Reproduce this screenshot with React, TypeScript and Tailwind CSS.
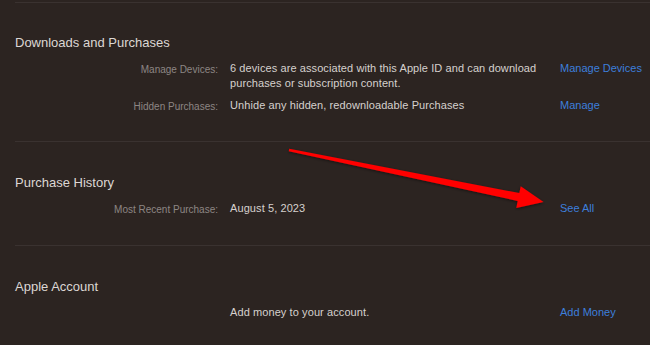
const rows = {
  downloads: [
    {
      label: 'Manage Devices:',
      value: '6 devices are associated with this Apple ID and can download purchases or subscription content.',
      link: 'Manage Devices',
    },
    {
      label: 'Hidden Purchases:',
      value: 'Unhide any hidden, redownloadable Purchases',
      link: 'Manage',
    },
  ],
  history: [{ label: 'Most Recent Purchase:', value: 'August 5, 2023', link: 'See All' }],
  account: [{ label: '', value: 'Add money to your account.', link: 'Add Money' }],
};

type Row = { label: string; value: string; link: string };

function Section({ title, items, pt, pb }: { title: string; items: Row[]; pt: string; pb: string }) {
  return (
    <section className={`ml-[15px] border-t border-[#3a3230] ${pt} ${pb}`}>
      <h2 className="text-[13px] leading-[16px] text-[#dcd7d4]">{title}</h2>
      <div className="mt-[10px] flex flex-col gap-[7px]">
        {items.map((r) => (
          <div key={r.link} className="flex items-start text-[11px] leading-[15px]">
            <div className="w-[203px] shrink-0 pt-[1px] text-right text-[10px] text-[#8c8684]">{r.label}</div>
            <div className="ml-[12px] w-[318px] shrink-0 tracking-[0.09px] text-[#d6d1ce]">{r.value}</div>
            <a href="#" className="ml-[12px] text-[#3d7fdc]">
              {r.link}
            </a>
          </div>
        ))}
      </div>
    </section>
  );
}

export default function App() {
  return (
    <div
      className="relative h-[345px] w-[650px] overflow-hidden bg-[#2c2421] pt-[2px]"
      style={{ fontFamily: '"Liberation Sans", Arial, sans-serif' }}
    >
      <Section title="Downloads and Purchases" items={rows.downloads} pt="pt-[32px]" pb="pb-[27px]" />
      <Section title="Purchase History" items={rows.history} pt="pt-[33px]" pb="pb-[28px]" />
      <Section title="Apple Account" items={rows.account} pt="pt-[33px]" pb="pb-[28px]" />

      {/* red annotation arrow */}
      <svg className="pointer-events-none absolute left-0 top-0" width="650" height="345">
        <defs>
          <filter id="sh" x="-10%" y="-50%" width="120%" height="200%">
            <feDropShadow dx="0" dy="1" stdDeviation="1.5" floodColor="#000" floodOpacity="0.5" />
          </filter>
        </defs>
        <polygon
          points="289.2,148.8 519.3,193.1 520.7,186.2 543.5,202 516.3,208 517.7,200.9 288.8,151.2"
          fill="#ff0000"
          filter="url(#sh)"
        />
      </svg>
    </div>
  );
}
